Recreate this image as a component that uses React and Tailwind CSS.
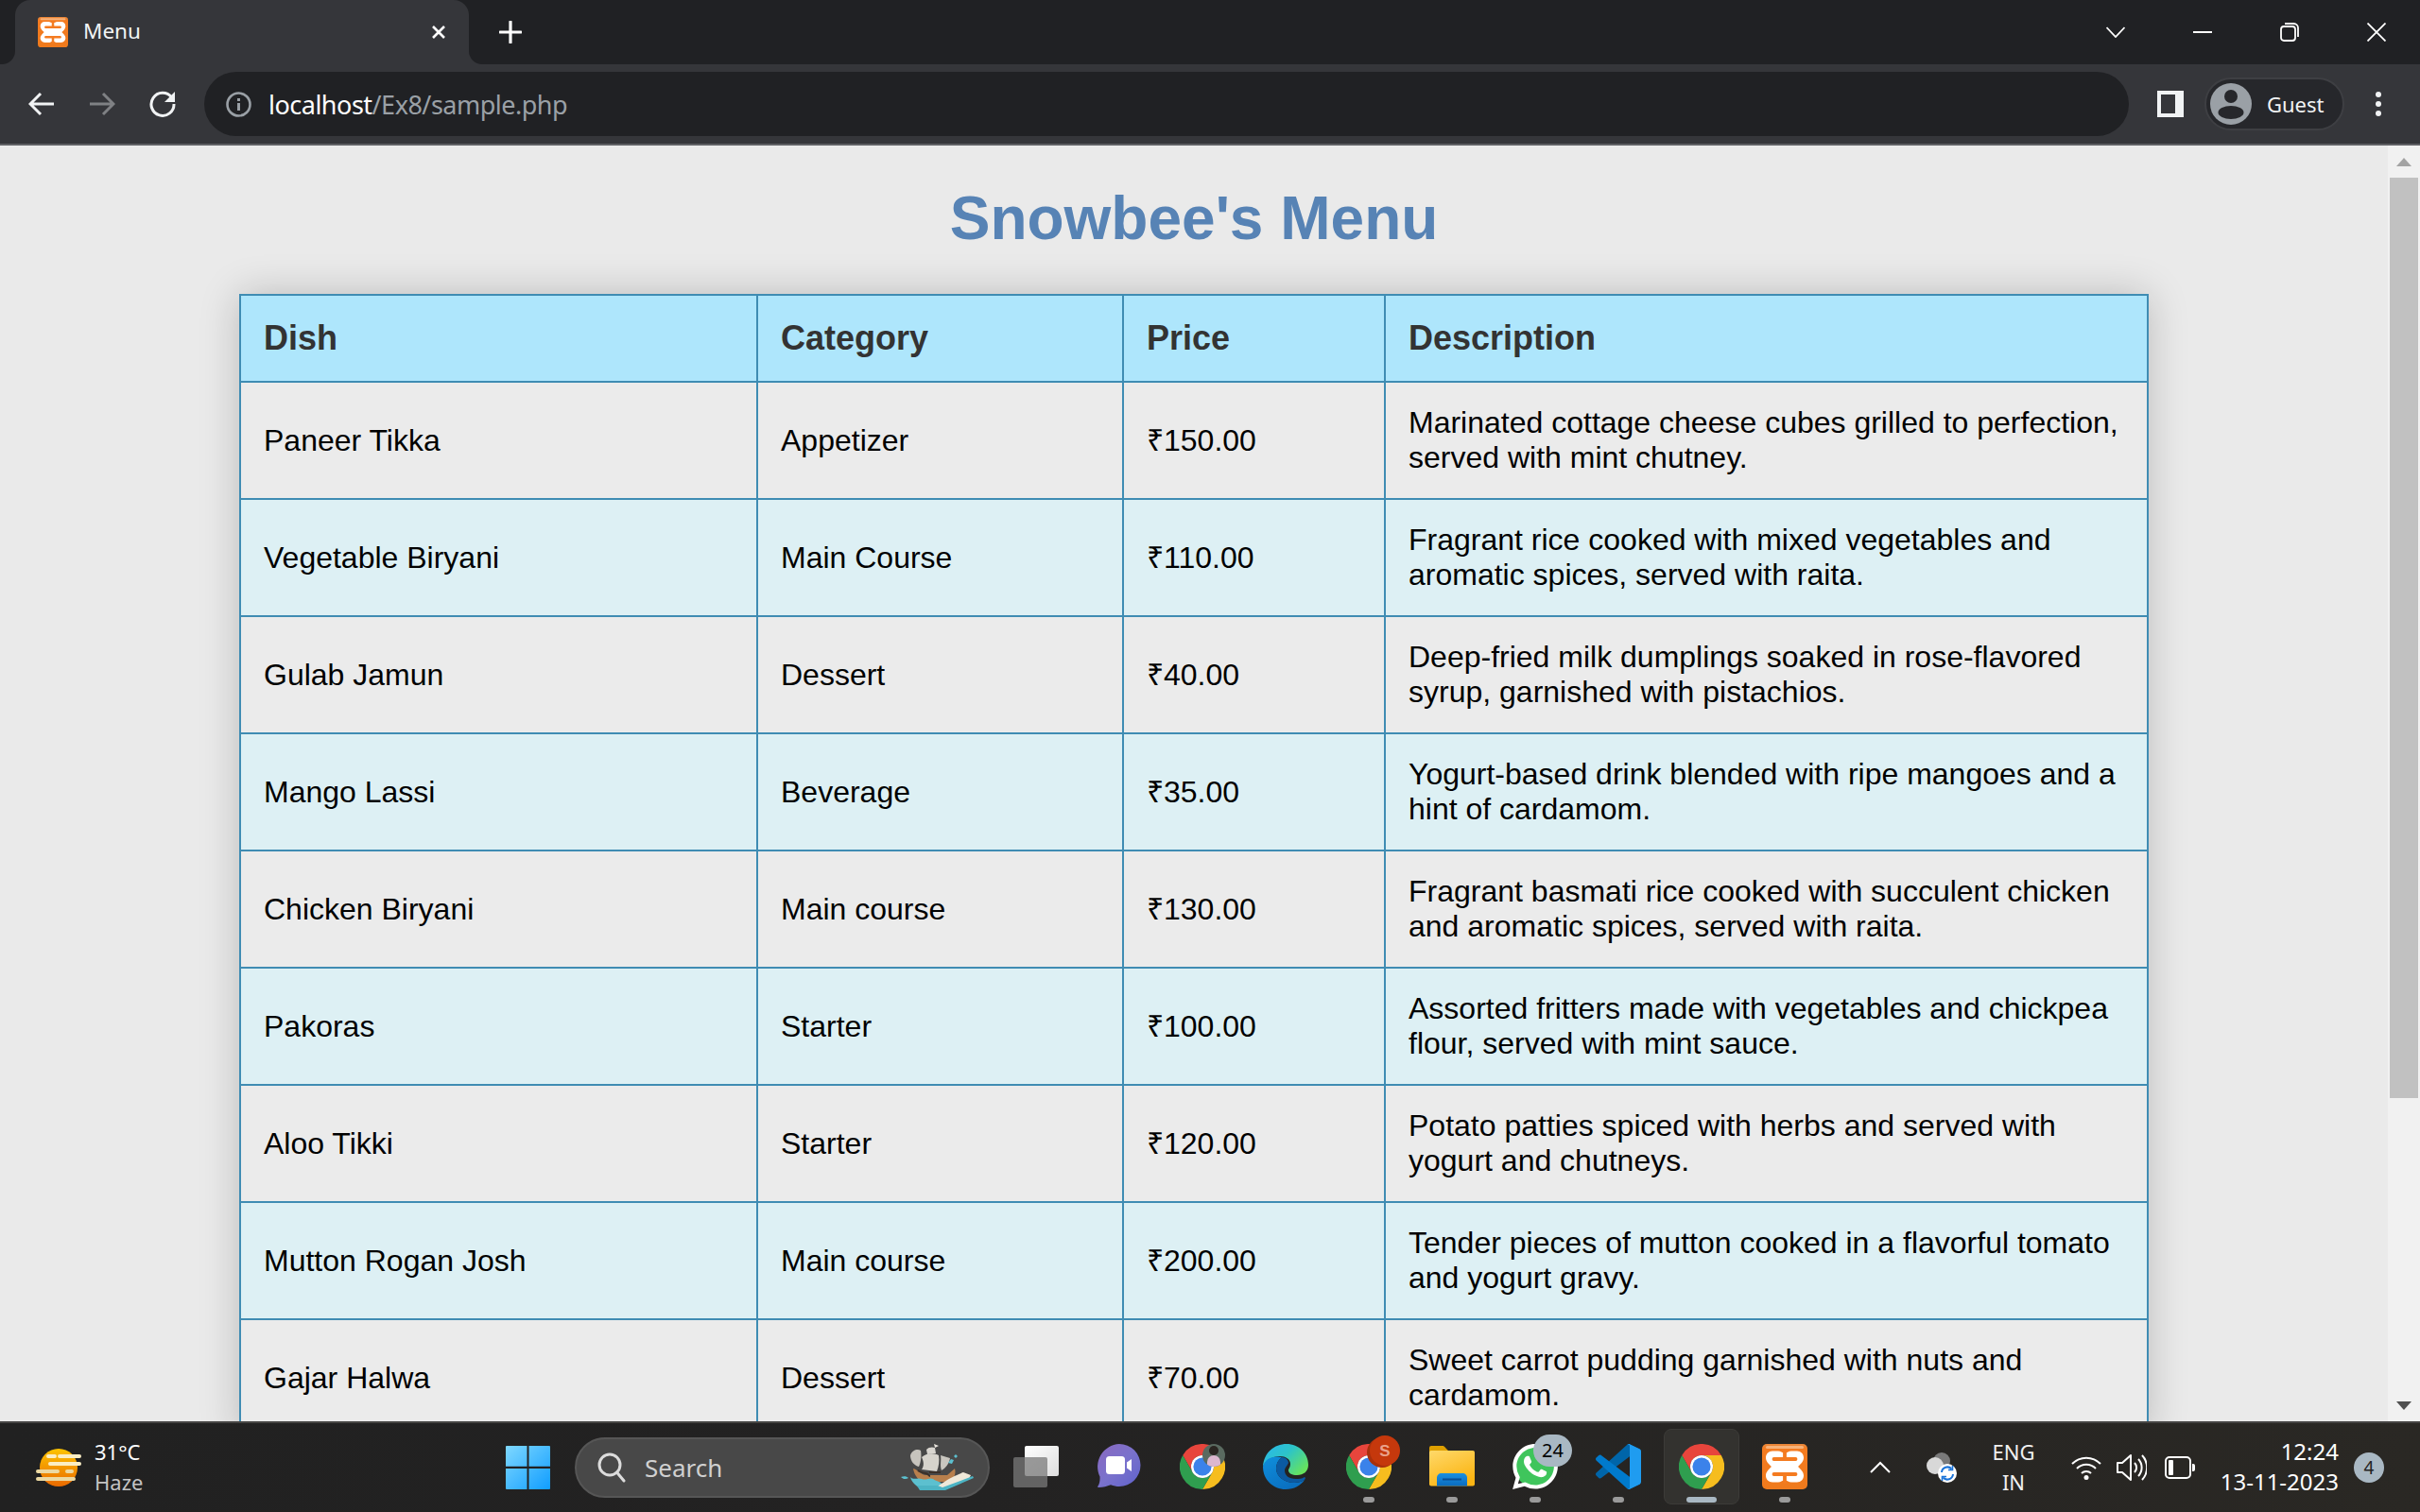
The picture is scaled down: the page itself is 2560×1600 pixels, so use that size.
import React from "react";

const rows = [
  ["Paneer Tikka", "Appetizer", "₹150.00", "Marinated cottage cheese cubes grilled to perfection, served with mint chutney."],
  ["Vegetable Biryani", "Main Course", "₹110.00", "Fragrant rice cooked with mixed vegetables and aromatic spices, served with raita."],
  ["Gulab Jamun", "Dessert", "₹40.00", "Deep-fried milk dumplings soaked in rose-flavored syrup, garnished with pistachios."],
  ["Mango Lassi", "Beverage", "₹35.00", "Yogurt-based drink blended with ripe mangoes and a hint of cardamom."],
  ["Chicken Biryani", "Main course", "₹130.00", "Fragrant basmati rice cooked with succulent chicken and aromatic spices, served with raita."],
  ["Pakoras", "Starter", "₹100.00", "Assorted fritters made with vegetables and chickpea flour, served with mint sauce."],
  ["Aloo Tikki", "Starter", "₹120.00", "Potato patties spiced with herbs and served with yogurt and chutneys."],
  ["Mutton Rogan Josh", "Main course", "₹200.00", "Tender pieces of mutton cooked in a flavorful tomato and yogurt gravy."],
  ["Gajar Halwa", "Dessert", "₹70.00", "Sweet carrot pudding garnished with nuts and cardamom."],
];

function Chrome({ size = 48 }) {
  return (
    <svg width={size} height={size} viewBox="0 0 48 48">
      <path d="M44.8 12A24 24 0 0 0 3.2 12L13.6 30A12 12 0 0 1 24 12Z" fill="#e8453c" />
      <path d="M44.8 12H24A12 12 0 0 1 34.4 30L24 48A24 24 0 0 0 44.8 12Z" fill="#f6bd1e" />
      <path d="M3.2 12L13.6 30A12 12 0 0 0 34.4 30L24 48A24 24 0 0 1 3.2 12Z" fill="#2f9e4f" />
      <circle cx="24" cy="24" r="12" fill="#fff" />
      <circle cx="24" cy="24" r="9.6" fill="#3b82ea" />
    </svg>
  );
}

function Xampp({ size = 48, id = "xg" }) {
  return (
    <svg width={size} height={size} viewBox="0 0 48 48">
      <defs>
        <linearGradient id={id} x1="0" y1="0" x2="0" y2="1">
          <stop offset="0" stopColor="#e9883c" />
          <stop offset="0.12" stopColor="#f47b20" />
          <stop offset="1" stopColor="#ef7a1c" />
        </linearGradient>
      </defs>
      <rect x="0" y="0" width="48" height="48" rx="5" fill={`url(#${id})`} />
      <rect x="4" y="2" width="40" height="3" rx="1.500" fill="#f7b27a" />
      <path d="M11 7.500h6c3 0 4 2 7 2s4-2 7-2h6c4 0 7 3 7 7 0 4-3 6.500-6 9.500 3 3 6 5.500 6 9.500 0 4-3 7-7 7h-6c-3 0-4-2-7-2s-4 2-7 2h-6c-4 0-7-3-7-7 0-4 3-6.500 6-9.500-3-3-6-5.500-6-9.500 0-4 3-7 7-7Z" fill="#fff" />
      <path d="M12.500 16H24V8M35.500 16H24M12.500 32H24v8M35.500 32H24" fill="none" stroke="#f47b20" strokeWidth="3.800" strokeLinecap="round" strokeLinejoin="round" />
    </svg>
  );
}

function Edge() {
  return (
    <svg width="48" height="48" viewBox="0 0 48 48">
      <defs>
        <linearGradient id="eg1" x1="0" y1="0" x2="1" y2="0.7">
          <stop offset="0" stopColor="#29b6ee" />
          <stop offset="0.5" stopColor="#2dc4c8" />
          <stop offset="1" stopColor="#66e35e" />
        </linearGradient>
        <linearGradient id="eg2" x1="0" y1="0" x2="0.6" y2="1">
          <stop offset="0" stopColor="#0f8fdc" />
          <stop offset="1" stopColor="#0a6fc0" />
        </linearGradient>
      </defs>
      <path d="M0 24C1 9 12 0 25 0c13 0 23 10 23 22 0 7-5 11-12 11-5 0-9-2-9-5 0-2 2-3 2-7 0-5-5-8-11-8C10 13 3 17 0 24Z" fill="url(#eg1)" />
      <path d="M0 24c0 14 11 24 24 24 9 0 16-4 20-10-3 2-7 3-11 3-11 0-19-7-19-15 0-5 2-9 6-12C11 12 2 15 0 24Z" fill="url(#eg2)" />
      <path d="M20 14c-4 3-6 7-6 12 0 8 8 15 19 15 4 0 8-1 11-3l1-2-1-1c-3 2-6 2-9 2-8 0-12-4-12-9 0-3 3-5 4-8 0-3-3-6-7-6Z" fill="#0b5aa2" />
    </svg>
  );
}

function Meet() {
  return (
    <svg width="48" height="48" viewBox="0 0 48 48">
      <defs>
        <linearGradient id="mg" x1="0" y1="0" x2="1" y2="1">
          <stop offset="0" stopColor="#8a68c0" />
          <stop offset="0.5" stopColor="#7a72cc" />
          <stop offset="1" stopColor="#5f62cc" />
        </linearGradient>
      </defs>
      <path d="M24 0a22.500 22.500 0 0 1 0 45c-3 0-6-.6-9-1.800C11 44.500 7 46 2 46c-1 0-1-1-.5-1.500 1.500-2 2.300-6 2-10A24 24 0 0 1 24 0Z" fill="url(#mg)" />
      <rect x="10" y="13" width="20" height="19" rx="3.500" fill="#fff" />
      <path d="M32 19.500l5-3.500v13l-5-3.500Z" fill="#fff" />
    </svg>
  );
}

function Folder() {
  return (
    <svg width="48" height="44" viewBox="0 0 48 44">
      <defs>
        <linearGradient id="fg" x1="0" y1="0" x2="0.5" y2="1">
          <stop offset="0" stopColor="#ffd96a" />
          <stop offset="1" stopColor="#fbb514" />
        </linearGradient>
        <linearGradient id="fb" x1="0" y1="0" x2="0" y2="1">
          <stop offset="0" stopColor="#1a8fe0" />
          <stop offset="1" stopColor="#0a6cc0" />
        </linearGradient>
      </defs>
      <path d="M0 2a2 2 0 0 1 2-2h12c1 0 2 .5 3 2l3 3v3H0Z" fill="#dfa000" />
      <rect x="0" y="5" width="48" height="37.500" rx="2" fill="url(#fg)" />
      <path d="M8 42.500V34c0-3 2-5 5-5h22c3 0 5 2 5 5v8.500Z" fill="url(#fb)" />
      <rect x="14" y="34.500" width="20" height="2" fill="#0a4f94" />
    </svg>
  );
}

function Whatsapp() {
  return (
    <svg width="48" height="48" viewBox="0 0 24 24">
      <circle cx="12" cy="12" r="11" fill="#3fc55c" />
      <path fill="#fff" d="M17.472 14.382c-.297-.149-1.758-.867-2.03-.967-.273-.099-.471-.148-.67.15-.197.297-.767.966-.94 1.164-.173.199-.347.223-.644.075-.297-.15-1.255-.463-2.39-1.475-.883-.788-1.48-1.761-1.653-2.059-.173-.297-.018-.458.13-.606.134-.133.298-.347.446-.52.149-.174.198-.298.298-.497.099-.198.05-.371-.025-.52-.075-.149-.669-1.612-.916-2.207-.242-.579-.487-.5-.669-.51-.173-.008-.371-.01-.57-.01-.198 0-.52.074-.792.372-.272.297-1.04 1.016-1.04 2.479 0 1.462 1.065 2.875 1.213 3.074.149.198 2.096 3.2 5.077 4.487.709.306 1.262.489 1.694.625.712.227 1.36.195 1.871.118.571-.085 1.758-.719 2.006-1.413.248-.694.248-1.289.173-1.413-.074-.124-.272-.198-.57-.347m-5.421 7.403h-.004a9.87 9.87 0 01-5.031-1.378l-.361-.214-3.741.982.998-3.648-.235-.374a9.86 9.86 0 01-1.51-5.26c.001-5.45 4.436-9.884 9.888-9.884 2.64 0 5.122 1.03 6.988 2.898a9.825 9.825 0 012.893 6.994c-.003 5.45-4.437 9.884-9.885 9.884m8.413-18.297A11.815 11.815 0 0012.05 0C5.495 0 .16 5.335.157 11.892c0 2.096.547 4.142 1.588 5.945L.057 24l6.305-1.654a11.882 11.882 0 005.683 1.448h.005c6.554 0 11.89-5.335 11.893-11.893a11.821 11.821 0 00-3.48-8.413Z" />
    </svg>
  );
}

function VSCode() {
  return (
    <svg width="48" height="48" viewBox="0 0 100 100">
      <path fill="#0065A9" d="M96.4614 10.7962L75.8569 0.875542C73.4719 -0.272773 70.6217 0.211611 68.75 2.08333L1.29858 63.5832C-0.515693 65.2373 -0.513607 68.0937 1.30308 69.7452L6.81272 74.754C8.29793 76.1042 10.5347 76.2036 12.1338 74.9905L93.3609 13.3699C96.086 11.3026 100 13.2462 100 16.6667V16.4275C100 14.0265 98.6246 11.8378 96.4614 10.7962Z" />
      <path fill="#007ACC" d="M96.4614 89.2038L75.8569 99.1245C73.4719 100.273 70.6217 99.7884 68.75 97.9167L1.29858 36.4169C-0.515693 34.7627 -0.513607 31.9063 1.30308 30.2548L6.81272 25.246C8.29793 23.8958 10.5347 23.7964 12.1338 25.0095L93.3609 86.6301C96.086 88.6974 100 86.7538 100 83.3334V83.5726C100 85.9735 98.6246 88.1622 96.4614 89.2038Z" />
      <path fill="#1F9CF0" d="M75.8578 99.1263C73.4721 100.274 70.6219 99.7885 68.75 97.9166C71.0564 100.223 75 98.5895 75 95.3278V4.67213C75 1.41039 71.0564 -0.223106 68.75 2.08329C70.6219 0.211402 73.4721 -0.273666 75.8578 0.873633L96.4587 10.7807C98.6234 11.8217 100 14.0112 100 16.4132V83.5871C100 85.9891 98.6234 88.1786 96.4586 89.2196L75.8578 99.1263Z" />
    </svg>
  );
}

function TaskView() {
  return (
    <svg width="48" height="44" viewBox="0 0 48 44">
      <defs>
        <linearGradient id="tv" x1="0" y1="0" x2="1" y2="1">
          <stop offset="0" stopColor="#ffffff" />
          <stop offset="1" stopColor="#dedede" />
        </linearGradient>
      </defs>
      <rect x="12" y="0" width="36" height="32" rx="2" fill="url(#tv)" />
      <rect x="0" y="12" width="36" height="32" rx="2" fill="#7a7a7a" fillOpacity="0.75" />
    </svg>
  );
}

function Windows() {
  return (
    <svg width="47" height="46" viewBox="0 0 47 46">
      <defs>
        <linearGradient id="wg" x1="0" y1="0" x2="1" y2="1" gradientUnits="objectBoundingBox">
          <stop offset="0" stopColor="#7fd8ff" />
          <stop offset="1" stopColor="#109dff" />
        </linearGradient>
      </defs>
      <path fill="url(#wg)" d="M1 0h21.500v21.800H0V1a1 1 0 0 1 1-1ZM24.500 0H46a1 1 0 0 1 1 1v20.800H24.500ZM0 24h22.500v22H1a1 1 0 0 1-1-1ZM24.500 24H47v21a1 1 0 0 1-1 1H24.500Z" />
    </svg>
  );
}

function Weather() {
  return (
    <svg width="50" height="42" viewBox="0 0 50 42">
      <defs>
        <linearGradient id="sun" x1="0" y1="0" x2="0" y2="1">
          <stop offset="0" stopColor="#fdc400" />
          <stop offset="1" stopColor="#ea6a00" />
        </linearGradient>
      </defs>
      <circle cx="24" cy="21" r="20" fill="url(#sun)" />
      <g strokeLinecap="round" strokeWidth="4">
        <path d="M13 9h7M25 9h21M15 17h31" stroke="#fbeec4" />
        <path d="M2 25h21M33 25h5M2 33h38" stroke="#ecd9a2" />
      </g>
    </svg>
  );
}

function Ship() {
  return (
    <svg width="82" height="50" viewBox="0 0 82 50">
      <path d="M15 26c5 1 8 7 14 7h22l8-7c2 7-2 12-8 14H28c-7 0-12-7-13-14Z" fill="#b87f4c" />
      <path d="M12 12c2-6 8-7 11-5 1 6 0 13-2 17-5-1-9-6-9-12Z" fill="#c7c4bd" />
      <path d="M24 14c6-5 14-4 18-2 1 6 0 12-2 17l-16-2c3-4 2-9 0-13Z" fill="#d6d3cc" />
      <path d="M44 12l10 3c-1 6-5 11-9 13-2-5 0-11-1-16Z" fill="#c9c6bf" />
      <path d="M29 6c2-3 7-3 9-2l1 6-9 1Z" fill="#d8d5cf" />
      <path d="M37 0l5 2-4 2Z" fill="#e7e3dc" />
      <path d="M20 28c2 1 5 3 8 3s3 3 5 3M32 30h12" stroke="#3b3029" strokeWidth="2" fill="none" />
      <path d="M2 35c3-1 6-1 8 1-3 2-6 1-8-1ZM12 35c4 4 7 0 12 2s8-2 12 0c4 3 8 2 12 8l-2 3H22c-2-4-8-5-10-13Z" fill="#5cc0cf" />
      <path d="M40 45c6-3 10-8 28-15l8 3-2 4-24 11Z" fill="#efe8d8" />
      <path d="M19 44h22l5 2 32-12 1 2-30 13H22Z" fill="#4cb4c4" />
      <path d="M52 20l3-4 3 1-2 4ZM58 13l2-2 2 2-2 2Z" fill="#5cc0cf" />
    </svg>
  );
}

function AppSlot({ children, dot, wide, active, badge }) {
  return (
    <div className="relative w-[88px] h-[94px] flex items-center justify-center">
      {active && <div className="absolute left-[4px] top-[6px] w-[80px] h-[80px] rounded-[8px] bg-[#33322f] border border-[#3c3b38]" />}
      <div className="relative flex items-center justify-center -mt-[2px]">{children}</div>
      {badge}
      {dot && <div className="absolute left-[38px] top-[78px] w-[12px] h-[6px] rounded-full bg-[#9a9a9a]" />}
      {wide && <div className="absolute left-[28px] top-[78px] w-[32px] h-[6px] rounded-full bg-[#a9b8c3]" />}
    </div>
  );
}

export default function App() {
  return (
    <div className="w-[2560px] h-[1600px] overflow-hidden flex flex-col bg-[#eaeaea] font-['Liberation_Sans',Arial,sans-serif]">
      {/* Tab strip */}
      <div className="h-[68px] shrink-0 flex bg-[linear-gradient(#202124_50%,#35363a_50%)] text-white font-['Noto_Sans',sans-serif]">
        <div className="w-[16px] bg-[#202124] rounded-br-[14px]" />
        <div className="w-[480px] rounded-t-[16px] bg-[#35363a] flex items-center pl-[24px]">
          <Xampp size={32} id="xfav" />
          <span className="ml-[16px] text-[22.500px] leading-none text-[#f1f3f4] -mt-[1px]">Menu</span>
          <svg className="ml-auto mr-[24px]" width="16" height="16" viewBox="0 0 16 16">
            <path d="M2 2l12 12M14 2L2 14" stroke="#fff" strokeWidth="2.600" />
          </svg>
        </div>
        <div className="flex-1 bg-[#202124] rounded-bl-[14px] flex items-center">
          <svg className="ml-[32px]" width="24" height="24" viewBox="0 0 24 24">
            <path d="M12 1v22M1 12h22" stroke="#fff" strokeWidth="3.200" strokeLinecap="round" />
          </svg>
          <div className="ml-auto flex">
            <div className="w-[92px] h-[58px] flex items-center justify-center">
              <svg width="20" height="12" viewBox="0 0 20 12"><path d="M.5 1L10 11 19.500 1" fill="none" stroke="#fff" strokeWidth="1.800" /></svg>
            </div>
            <div className="w-[92px] h-[58px] flex items-center justify-center">
              <div className="w-[20px] h-[2px] bg-white" />
            </div>
            <div className="w-[92px] h-[58px] flex items-center justify-center">
              <svg width="20" height="20" viewBox="0 0 20 20"><rect x="1" y="4" width="15" height="15" rx="3" fill="none" stroke="#fff" strokeWidth="1.800" /><path d="M5 1h9.500A4.500 4.500 0 0 1 19 5.500V15" fill="none" stroke="#fff" strokeWidth="1.800" /></svg>
            </div>
            <div className="w-[92px] h-[58px] flex items-center justify-center">
              <svg width="20" height="20" viewBox="0 0 20 20"><path d="M.5.5l19 19M19.500.5l-19 19" stroke="#fff" strokeWidth="1.800" /></svg>
            </div>
          </div>
        </div>
      </div>

      {/* Toolbar */}
      <div className="h-[86px] shrink-0 bg-[#35363a] border-b-2 border-[#5f6064] flex items-center pl-[12px] font-['Noto_Sans',sans-serif]">
        <div className="w-[64px] flex justify-center">
          <svg width="28" height="26" viewBox="0 0 28 26"><path d="M27 13H3M13 2L2 13l11 11" fill="none" stroke="#f1f3f4" strokeWidth="3" /></svg>
        </div>
        <div className="w-[64px] flex justify-center">
          <svg width="28" height="26" viewBox="0 0 28 26"><path d="M1 13h24M15 2l11 11-11 11" fill="none" stroke="#7f8184" strokeWidth="3" /></svg>
        </div>
        <div className="w-[64px] flex justify-center">
          <svg width="28" height="28" viewBox="0 0 28 28"><path d="M23.500 7A12 12 0 1 0 26 14" fill="none" stroke="#f1f3f4" strokeWidth="3" /><path d="M27 1v11H16Z" fill="#f1f3f4" /></svg>
        </div>
        <div className="ml-[12px] w-[2036px] h-[68px] rounded-full bg-[#202124] flex items-center pl-[23px]">
          <svg width="27" height="27" viewBox="0 0 27 27">
            <circle cx="13.500" cy="13.500" r="12" fill="none" stroke="#9aa0a6" strokeWidth="2.600" />
            <rect x="12" y="12" width="3" height="8" fill="#9aa0a6" />
            <rect x="12" y="7" width="3" height="3" fill="#9aa0a6" />
          </svg>
          <span className="ml-[18px] text-[27px] leading-none text-white tracking-[-0.5px]">localhost<span className="text-[#9aa0a6]">/Ex8/sample.php</span></span>
        </div>
        <div className="ml-[30px] w-[28px] h-[28px] bg-[#f1f3f4] pl-[4px] py-[4px]">
          <div className="w-[15px] h-[20px] bg-[#35363a]" />
        </div>
        <div className="ml-[22px] w-[148px] h-[56px] rounded-full bg-[#26272b] border-2 border-[#3e3f43] flex items-center pl-[4px]">
          <svg width="44" height="44" viewBox="0 0 44 44">
            <circle cx="22" cy="22" r="22" fill="#9aa0a6" />
            <circle cx="22" cy="14" r="7" fill="#26272b" />
            <ellipse cx="22" cy="31" rx="13.500" ry="7" fill="#26272b" />
          </svg>
          <span className="ml-[16px] text-[22px] leading-none text-[#f1f3f4]">Guest</span>
        </div>
        <div className="ml-[26px] w-[20px] flex flex-col items-center gap-[4px]">
          <div className="w-[6px] h-[6px] rounded-full bg-[#f1f3f4]" />
          <div className="w-[6px] h-[6px] rounded-full bg-[#f1f3f4]" />
          <div className="w-[6px] h-[6px] rounded-full bg-[#f1f3f4]" />
        </div>
      </div>

      {/* Page */}
      <div className="flex-1 min-h-0 flex overflow-hidden">
        <div className="flex-1 min-w-0 overflow-hidden pt-[40px]">
          <h1 className="text-center text-[64px] leading-[74px] font-bold text-[#5783b5] mb-[43px]">Snowbee's Menu</h1>
          <table className="ml-[253px] w-[2018px] table-fixed border-collapse shadow-[0_0_40px_rgba(0,0,0,0.2)] text-[32px] leading-[37px] text-black">
            <colgroup>
              <col className="w-[547px]" />
              <col className="w-[387px]" />
              <col className="w-[277px]" />
              <col className="w-[807px]" />
            </colgroup>
            <thead>
              <tr className="bg-[#aee6fc] text-[#333333]">
                {["Dish", "Category", "Price", "Description"].map((h) => (
                  <th key={h} className="border-2 border-[#3f8cb3] p-[24px] text-left text-[36px] leading-[42px] font-bold">{h}</th>
                ))}
              </tr>
            </thead>
            <tbody>
              {rows.map((r, i) => (
                <tr key={r[0]} className={i % 2 === 0 ? "bg-[#ebebeb]" : "bg-[#ddf0f4]"}>
                  {r.map((c, j) => (
                    <td key={j} className="border-2 border-[#3f8cb3] p-[24px] text-left">{c}</td>
                  ))}
                </tr>
              ))}
            </tbody>
          </table>
        </div>
        <div className="w-[34px] shrink-0 bg-[#f1f1f1] flex flex-col items-center">
          <div className="h-[34px] flex items-center justify-center">
            <svg width="16" height="9" viewBox="0 0 16 9"><path d="M8 0l8 9H0Z" fill="#a3a3a3" /></svg>
          </div>
          <div className="w-[30px] h-[974px] bg-[#c1c1c1]" />
          <div className="mt-auto h-[34px] flex items-center justify-center">
            <svg width="16" height="9" viewBox="0 0 16 9"><path d="M8 9L0 0h16Z" fill="#505050" /></svg>
          </div>
        </div>
      </div>

      {/* Taskbar */}
      <div className="h-[96px] shrink-0 border-t-2 border-[#454443] bg-[linear-gradient(90deg,#212121,#232222_40%,#2a2824)] flex items-center text-white font-['Noto_Sans',sans-serif]">
        <div className="w-[535px] shrink-0 flex items-center pl-[38px]">
          <Weather />
          <div className="ml-[12px] flex flex-col gap-[6px] -mt-[3px]">
            <span className="text-[22px] leading-[26px] text-white">31°C</span>
            <span className="text-[22px] leading-[26px] text-[#c4c4c4]">Haze</span>
          </div>
        </div>
        <Windows />
        <div className="ml-[26px] w-[439px] h-[64px] shrink-0 rounded-full bg-[#484848] border-2 border-[#565656] flex items-center pl-[22px]">
          <svg width="30" height="32" viewBox="0 0 30 32">
            <circle cx="13" cy="13" r="11" fill="none" stroke="#dcdcdc" strokeWidth="3" />
            <path d="M20.500 21L28 30" stroke="#dcdcdc" strokeWidth="3" strokeLinecap="round" />
          </svg>
          <span className="ml-[20px] text-[26px] leading-none text-[#d0d0d0]">Search</span>
          <div className="ml-auto mr-[12px]"><Ship /></div>
        </div>
        <div className="ml-[5px] flex shrink-0">
          <AppSlot><TaskView /></AppSlot>
          <AppSlot><Meet /></AppSlot>
          <AppSlot
            badge={
              <div className="absolute left-[44px] top-[22px] w-[24px] h-[24px] rounded-full overflow-hidden bg-[#5a6a60]">
                <div className="mx-auto mt-[2px] w-[10px] h-[10px] rounded-full bg-[#2b2622]" />
                <div className="mx-auto w-[14px] h-[14px] rounded-t-full bg-[#dcb7cf]" />
              </div>
            }
          >
            <Chrome />
          </AppSlot>
          <AppSlot><Edge /></AppSlot>
          <AppSlot
            dot
            badge={
              <div className="absolute left-[45px] top-[13px] w-[32px] h-[32px] rounded-full bg-[#c5380c] flex items-center justify-center text-[17px] leading-none font-bold text-[#eaa38d] shadow-[-3px_2px_0_#a8300c] font-['Liberation_Sans',sans-serif]">S</div>
            }
          >
            <Chrome />
          </AppSlot>
          <AppSlot dot><Folder /></AppSlot>
          <AppSlot
            dot
            badge={
              <div className="absolute left-[42px] top-[12px] w-[41px] h-[34px] rounded-full bg-[#a9b8c3] flex items-center justify-center text-[20px] leading-none text-black">24</div>
            }
          >
            <Whatsapp />
          </AppSlot>
          <AppSlot dot><VSCode /></AppSlot>
          <AppSlot active wide><Chrome /></AppSlot>
          <AppSlot dot><Xampp id="xbar" /></AppSlot>
        </div>
        <div className="flex-1 flex items-center">
          <svg className="ml-[45px]" width="24" height="14" viewBox="0 0 24 14"><path d="M2 12L12 2l10 10" fill="none" stroke="#fff" strokeWidth="2" /></svg>
          <svg className="ml-[36px]" width="34" height="34" viewBox="0 0 34 34">
            <circle cx="17" cy="10" r="9" fill="#7a7a7a" />
            <circle cx="10" cy="15" r="9" fill="#d8d8d8" />
            <circle cx="23" cy="23" r="10" fill="#fff" />
            <path d="M17 22a6 6 0 0 1 10.500-3.500M29 24a6 6 0 0 1-10.500 3.500" fill="none" stroke="#1a73d8" strokeWidth="2" />
            <path d="M28.500 15v4.500H24M17.500 31v-4.500H22" fill="none" stroke="#1a73d8" strokeWidth="1.600" />
          </svg>
          <div className="ml-[29px] w-[60px] flex flex-col items-center gap-[6px] text-[22px] leading-[26px] text-[#f0f0f0] -mt-[2px]">
            <span>ENG</span>
            <span>IN</span>
          </div>
          <svg className="ml-[31px]" width="32" height="28" viewBox="0 0 32 28">
            <path d="M1 10a21 21 0 0 1 30 0M6 15a14 14 0 0 1 20 0M11 20a7 7 0 0 1 10 0" fill="none" stroke="#fff" strokeWidth="2" />
            <circle cx="16" cy="24.500" r="2.500" fill="#fff" />
          </svg>
          <svg className="ml-[16px]" width="32" height="32" viewBox="0 0 32 32">
            <path d="M1 11h5l9-8v26l-9-8H1Z" fill="none" stroke="#fff" strokeWidth="2" strokeLinejoin="round" />
            <path d="M19 11a7 7 0 0 1 0 10M23 7a13 13 0 0 1 0 18M27 3a19 19 0 0 1 0 26" fill="none" stroke="#fff" strokeWidth="2" />
          </svg>
          <svg className="ml-[19px]" width="32" height="24" viewBox="0 0 32 24">
            <rect x="1" y="1" width="26" height="22" rx="4" fill="none" stroke="#fff" strokeWidth="2" />
            <rect x="4" y="4" width="5" height="16" rx="1" fill="#fff" />
            <path d="M29 8h1a2 2 0 0 1 2 2v4a2 2 0 0 1-2 2h-1Z" fill="#fff" />
          </svg>
          <div className="ml-[22px] w-[130px] flex flex-col items-end gap-[6px] text-[24px] leading-[26px] text-white whitespace-nowrap -mt-[2px]">
            <span>12:24</span>
            <span>13-11-2023</span>
          </div>
          <div className="ml-[16px] w-[32px] h-[32px] rounded-full bg-[#a9b8c3] flex items-center justify-center text-[19px] leading-none text-[#222]">4</div>
        </div>
      </div>
    </div>
  );
}
